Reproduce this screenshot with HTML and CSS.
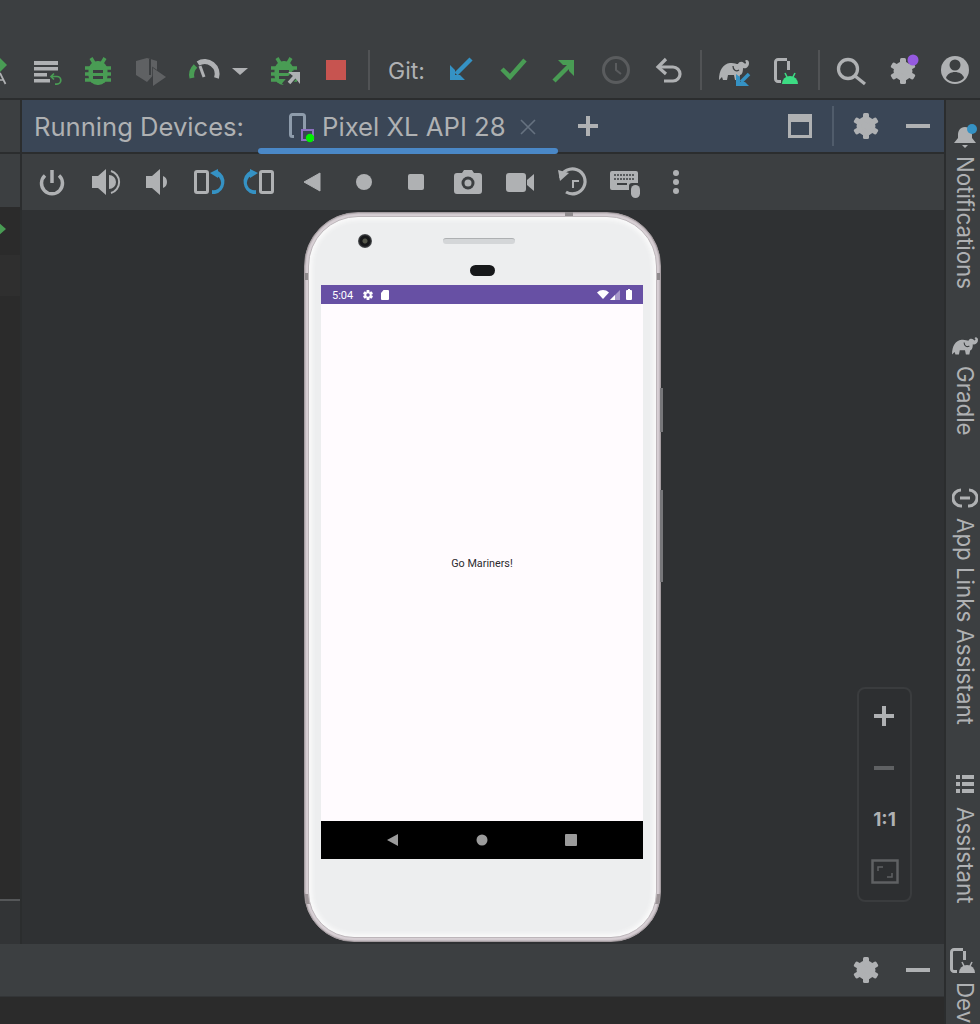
FILE: index.html
```html
<!DOCTYPE html>
<html lang="en">
<head>
<meta charset="utf-8">
<title>Running Devices</title>
<link rel="stylesheet" href="styles.css">
</head>
<body>
<svg class="defs" width="0" height="0" aria-hidden="true">
  <defs>
    <symbol id="gear" viewBox="0 0 26 26">
      <g fill="#afb1b3">
        <rect x="10" y="0" width="6" height="26" rx="1.5"/>
        <rect x="10" y="0" width="6" height="26" rx="1.5" transform="rotate(60 13 13)"/>
        <rect x="10" y="0" width="6" height="26" rx="1.5" transform="rotate(120 13 13)"/>
      </g>
      <circle cx="13" cy="13" r="7" fill="none" stroke="#afb1b3" stroke-width="5"/>
    </symbol>
    <symbol id="bug" viewBox="0 0 26 28">
      <g stroke="#499c54" stroke-width="3.500" fill="none">
        <path d="M6 1l3 5M20 1l-3 5M0 11h6M26 11h-6M0 17h6M26 17h-6M0 23h6M26 23h-6"/>
      </g>
      <rect x="3.500" y="4" width="19" height="24" rx="9" fill="#499c54"/>
      <path d="M8 13h10v3H8zM8 19h10v3H8z" fill="#3c3f41"/>
    </symbol>
    <symbol id="elephant" viewBox="0 0 30 23">
      <path fill="#afb1b3" d="M0 22C0 12 4 6 11 5c4-.5 6 1 8 1 1-2.500 4-3 6-1 1 1 2 1 2-1l-1-1c1-2 4-1 4 2 0 4-3 6-6 5 0 4-1 7-3 7l-1 5h-4l-1-5H9l-1 5H4l-1-3z"/>
      <path d="M14 8c0 4 3 6 6 4" fill="none" stroke="#3c3f41" stroke-width="1.300"/>
    </symbol>
    <symbol id="device" viewBox="0 0 16 25">
      <path d="M13 1.500H4A2.500 2.500 0 0 0 1.500 4v17A2.500 2.500 0 0 0 4 23.500h3M14.500 3v9" fill="none" stroke="#afb1b3" stroke-width="3"/>
    </symbol>
  </defs>
</svg>

<div class="app">
  <header class="toolbar">
    <svg class="slot-edge" viewBox="0 0 21 48"><path d="M0 11l7 7-7 7z" fill="#499c54"/><path d="M0 26l5.500 11M0 33h4" fill="none" stroke="#afb1b3" stroke-width="1.700"/></svg>

    <svg class="slot" viewBox="0 0 52 48"><path fill="#afb1b3" d="M13 14h24v4H13zM13 20h24v3.500H13zM13 26h13v3.500H13zM13 32h16v3.500H13z"/><path d="M33 26.500l-3 3 3 3M30 29.500h6a3.800 3.800 0 0 1 0 7.600h-2" fill="none" stroke="#499c54" stroke-width="1.700"/></svg>
    <svg class="slot" viewBox="0 0 52 48"><use href="#bug" x="12" y="10" width="26" height="28"/></svg>
    <svg class="slot" viewBox="0 0 52 48"><path fill="#5f6163" d="M11 14l11-3 10 3v10L22 35l-11-7z"/><path d="M25 12v16" stroke="#3c3f41" stroke-width="2"/><path d="M28 21l13 9-13 9z" fill="#5f6163" stroke="#3c3f41" stroke-width="1.500" paint-order="stroke"/></svg>
    <svg class="slot" viewBox="0 0 52 48"><path d="M15 31a12.500 12.500 0 0 1 3.500-12" fill="none" stroke="#499c54" stroke-width="5"/><path d="M21 16.500A12.500 12.500 0 0 1 39.500 31" fill="none" stroke="#afb1b3" stroke-width="5"/><path d="M23 19l4 11" stroke="#afb1b3" stroke-width="3"/></svg>
    <svg class="slot-drop" viewBox="0 0 24 48"><path d="M3 21h16l-8 7z" fill="#afb1b3"/></svg>
    <svg class="slot after-drop" viewBox="0 0 52 48"><use href="#bug" x="12" y="10" width="26" height="28"/><path d="M26 39l11-13" stroke="#3c3f41" stroke-width="8"/><path d="M30 36l8-9" stroke="#afb1b3" stroke-width="3.500"/><path d="M29 25h12v12l-4-5-3-3z" fill="#afb1b3"/></svg>
    <svg class="slot" viewBox="0 0 52 48"><rect x="15" y="13" width="20" height="20" fill="#c75450"/></svg>
    <span class="sep sep-a"></span>
    <span class="git">Git:</span>
    <svg class="slot after-git" viewBox="0 0 52 48"><path d="M37 12L22 27" stroke="#3592c4" stroke-width="4.500"/><path d="M16 18v15h15l-5-5h-5v-5z" fill="#3592c4"/></svg>
    <svg class="slot after-blue" viewBox="0 0 52 48"><path d="M15 22l8 8 15-17" fill="none" stroke="#499c54" stroke-width="4.500"/></svg>
    <svg class="slot squeeze" viewBox="0 0 52 48"><path d="M16 34l17-17" stroke="#499c54" stroke-width="4.500"/><path d="M20 13h16v16l-5-5v-6h-6z" fill="#499c54"/></svg>
    <svg class="slot" viewBox="0 0 52 48"><circle cx="26" cy="23" r="12.500" fill="none" stroke="#5a5c5e" stroke-width="3"/><path d="M26 16v7l5 4" fill="none" stroke="#5a5c5e" stroke-width="2"/></svg>
    <svg class="slot" viewBox="0 0 52 48"><path d="M17 20h14a7 7 0 0 1 0 14h-9" fill="none" stroke="#afb1b3" stroke-width="3.200"/><path d="M24 12l-8 8 8 7" fill="none" stroke="#afb1b3" stroke-width="3.200"/></svg>
    <span class="sep sep-b"></span>
    <svg class="slot after-sep" viewBox="0 0 52 48"><use href="#elephant" x="11" y="11" width="30" height="23"/><path d="M26 39l15-15v15z" fill="#3c3f41"/><path d="M41 27L33 35" stroke="#3592c4" stroke-width="3.500"/><path d="M28 27v12h13l-4-4h-5v-5z" fill="#3592c4"/></svg>
    <svg class="slot" viewBox="0 0 52 48"><use href="#device" x="14" y="11" width="16" height="25"/><path d="M22 37a8 8 0 0 1 16 0z" fill="#3ddc84"/><path d="M25 26l2 4M35 26l-2 4" stroke="#3ddc84" stroke-width="1.600"/></svg>
    <span class="sep sep-c"></span>
    <svg class="slot after-sep-c" viewBox="0 0 52 48"><circle cx="22" cy="22" r="9.500" fill="none" stroke="#afb1b3" stroke-width="3.300"/><path d="M29 29l10 8" stroke="#afb1b3" stroke-width="3.300"/></svg>
    <svg class="slot" viewBox="0 0 52 48"><use href="#gear" x="12" y="11" width="26" height="26"/><circle cx="35" cy="13" r="5.500" fill="#955ae0"/></svg>
    <svg class="slot" viewBox="0 0 52 48"><circle cx="25" cy="23" r="14" fill="#afb1b3"/><circle cx="25" cy="18" r="5.500" fill="#3c3f41"/><path d="M16 31c1-4 5-6 9-6s8 2 9 6a12 12 0 0 1-18 0z" fill="#3c3f41"/></svg>
  </header>

  <div class="workspace">
    <div class="main-col">
      <div class="main-row">
        <aside class="left-strip">
          <div class="ls-light ls-head"></div>
          <div class="ls-light ls-tools"></div>
          <div class="ls-dark ls-check">
            <svg class="ls-mark" viewBox="0 0 6 14"><path d="M-2 0l8 7-8 7z" fill="#499c54"/></svg>
          </div>
          <div class="ls-row"></div>
          <div class="ls-dark ls-fill"></div>
          <div class="ls-rule"></div>
          <div class="ls-foot"></div>
        </aside>

        <section class="center">
          <div class="header">
            <span class="header-title">Running Devices:</span>
            <div class="tab">
              <svg class="tab-icon" viewBox="0 0 26 30"><path d="M5 23.500H3.500a2 2 0 0 1-2-2V3.500a2 2 0 0 1 2-2h10a2 2 0 0 1 2 2V16" fill="none" stroke="#8e9cab" stroke-width="3"/><path d="M13 17h11v10H13z" fill="#3a4656" stroke="#8d6fc0" stroke-width="2"/><circle cx="21" cy="25" r="4.200" fill="#00f000"/></svg>
              <span class="tab-label">Pixel XL API 28</span>
              <svg class="tab-close" viewBox="0 0 16 16"><path d="M1 1l14 14M15 1L1 15" stroke="#667280" stroke-width="1.600"/></svg>
            </div>
            <svg class="hdr-plus" viewBox="0 0 20 20"><path d="M10 0v20M0 10h20" stroke="#afb1b3" stroke-width="4"/></svg>
            <div class="hdr-actions">
              <svg class="hdr-window" viewBox="0 0 24 24"><path d="M0 0h24v8H0z" fill="#afb1b3"/><path d="M1.500 1.500h21v21h-21z" fill="none" stroke="#afb1b3" stroke-width="3"/></svg>
              <span class="hdr-sep"></span>
              <svg class="hdr-gear"><use href="#gear"/></svg>
              <span class="minus"></span>
            </div>
          </div>

          <div class="tools">
            <svg class="tool" viewBox="0 0 52 56"><path d="M19 21.500a10.500 10.500 0 1 0 14 0" fill="none" stroke="#afb1b3" stroke-width="3.500"/><path d="M26 16v13" stroke="#afb1b3" stroke-width="3.500"/></svg>
            <svg class="tool" viewBox="0 0 52 56"><path d="M14 22h6l8-7v26l-8-7h-6z" fill="#afb1b3"/><path d="M31 21a7 7 0 0 1 0 14z" fill="#afb1b3"/><path d="M33 17a11.500 11.500 0 0 1 0 22" fill="none" stroke="#afb1b3" stroke-width="2"/></svg>
            <svg class="tool" viewBox="0 0 52 56"><path d="M16 22h6l8-7v26l-8-7h-6z" fill="#afb1b3"/><path d="M33 22a6.500 6.500 0 0 1 0 12z" fill="#afb1b3"/></svg>
            <svg class="tool" viewBox="0 0 52 56"><rect x="13.500" y="17.500" width="12" height="21" rx="1.500" fill="none" stroke="#afb1b3" stroke-width="3"/><path d="M30 40h3a12.500 12.500 0 0 0 3-23l-1 5a7.500 7.500 0 0 1-5 14z" fill="#3592c4"/><path d="M28 19l8-4v9z" fill="#3592c4"/></svg>
            <svg class="tool" viewBox="0 0 52 56"><rect x="26.500" y="17.500" width="12" height="21" rx="1.500" fill="none" stroke="#afb1b3" stroke-width="3"/><path d="M22 40h-3a12.500 12.500 0 0 1-3-23l1 5a7.500 7.500 0 0 0 5 14z" fill="#3592c4"/><path d="M24 19l-8-4v9z" fill="#3592c4"/></svg>
            <svg class="tool" viewBox="0 0 52 56"><path d="M18 28l16-9v18z" fill="#afb1b3" stroke="#afb1b3" stroke-linejoin="round"/></svg>
            <svg class="tool" viewBox="0 0 52 56"><circle cx="26" cy="28" r="8" fill="#afb1b3"/></svg>
            <svg class="tool" viewBox="0 0 52 56"><rect x="18" y="20" width="16" height="16" rx="2" fill="#afb1b3"/></svg>
            <svg class="tool" viewBox="0 0 52 56"><path d="M15 19h5l2-3h8l2 3h5a3 3 0 0 1 3 3v15a3 3 0 0 1-3 3H15a3 3 0 0 1-3-3V22a3 3 0 0 1 3-3z" fill="#afb1b3"/><circle cx="26" cy="29" r="6.500" fill="#3c3f41"/><circle cx="26" cy="29" r="3.500" fill="#afb1b3"/></svg>
            <svg class="tool" viewBox="0 0 52 56"><rect x="12" y="19" width="20" height="19" rx="3" fill="#afb1b3"/><path d="M33 26l7-6v17l-7-6z" fill="#afb1b3"/></svg>
            <svg class="tool" viewBox="0 0 52 56"><path d="M14.500 24A12.500 12.500 0 1 1 20 38" fill="none" stroke="#afb1b3" stroke-width="3.200"/><path d="M12 16l11 3-9 8z" fill="#afb1b3"/><path d="M33 27h-6v7" fill="none" stroke="#afb1b3" stroke-width="2"/></svg>
            <svg class="tool" viewBox="0 0 52 56"><path d="M14 17h24a2 2 0 0 1 2 2v10h-6a3 3 0 0 0-3 3v4H14a2 2 0 0 1-2-2V19a2 2 0 0 1 2-2z" fill="#afb1b3"/><path d="M16 21h20M16 25h20" stroke="#3c3f41" stroke-width="1.500" stroke-dasharray="2 1"/><path d="M19 30h10" stroke="#3c3f41" stroke-width="2"/><rect x="33" y="31" width="9" height="13" rx="4.500" fill="#afb1b3"/></svg>
            <svg class="tool" viewBox="0 0 52 56"><g fill="#afb1b3"><circle cx="26" cy="19" r="3"/><circle cx="26" cy="28" r="3"/><circle cx="26" cy="37" r="3"/></g></svg>
          </div>

          <div class="canvas">
            <div class="phone">
              <span class="phone-mark"></span>
              <span class="phone-key key-a"></span>
              <span class="phone-key key-b"></span>
              <div class="face">
                <span class="camera"></span>
                <span class="speaker"></span>
                <span class="sensor"></span>
                <div class="screen">
                  <div class="status">
                    <span class="clock">5:04</span>
                    <svg class="st-gear" viewBox="0 0 26 26"><g fill="#fff"><rect x="9" y="0" width="8" height="26" rx="2"/><rect x="9" y="0" width="8" height="26" rx="2" transform="rotate(60 13 13)"/><rect x="9" y="0" width="8" height="26" rx="2" transform="rotate(120 13 13)"/></g><circle cx="13" cy="13" r="4.500" fill="#6750a4"/></svg>
                    <svg class="st-sd" viewBox="0 0 8 10"><path d="M2.500 0H7a1 1 0 0 1 1 1v8a1 1 0 0 1-1 1H1a1 1 0 0 1-1-1V3z" fill="#fff"/></svg>
                    <span class="st-spacer"></span>
                    <svg class="st-wifi" viewBox="0 0 12 9"><path d="M0 2.500C3.500-.8 8.500-.8 12 2.500L6 9z" fill="#fff"/></svg>
                    <svg class="st-signal" viewBox="0 0 10 10"><path d="M0 10L10 0v10z" fill="#a899cb"/><path d="M0 10l5-5v5z" fill="#fff"/></svg>
                    <svg class="st-batt" viewBox="0 0 6 11"><path d="M2 0h2v1h1a1 1 0 0 1 1 1v8a1 1 0 0 1-1 1H1a1 1 0 0 1-1-1V2a1 1 0 0 1 1-1h1z" fill="#fff"/></svg>
                  </div>
                  <div class="content"><span class="hello">Go Mariners!</span></div>
                  <div class="navbar">
                    <svg class="nav-ico" viewBox="0 0 12 12"><path d="M0 6l11-6v12z" fill="#9b9b9b"/></svg>
                    <svg class="nav-ico" viewBox="0 0 12 12"><circle cx="6" cy="6" r="5.500" fill="#9b9b9b"/></svg>
                    <svg class="nav-ico" viewBox="0 0 12 12"><rect width="12" height="12" rx="1" fill="#9b9b9b"/></svg>
                  </div>
                </div>
              </div>
            </div>

            <div class="zoom-panel">
              <svg class="zp" viewBox="1 0 51 52"><path d="M26 16v20M16 26h20" stroke="#afb1b3" stroke-width="4"/></svg>
              <svg class="zp" viewBox="1 0 51 52"><path d="M16 26h20" stroke="#5f6163" stroke-width="4"/></svg>
              <span class="zp zp-text">1:1</span>
              <svg class="zp" viewBox="1 1 51 52"><rect x="14.500" y="15.500" width="25" height="22" fill="none" stroke="#5f6163" stroke-width="2.500"/><path d="M20 26v-4h5M34 28v4h-5" fill="none" stroke="#5f6163" stroke-width="1.500"/></svg>
            </div>
          </div>
        </section>
      </div>

      <div class="bottom-bar">
        <svg class="hdr-gear"><use href="#gear"/></svg>
        <span class="minus"></span>
      </div>
      <div class="footer"></div>
    </div>

    <aside class="sidebar">
      <svg class="side-ico ico-bell" viewBox="0 0 26 26"><path d="M13 4c-5 0-7 4-7 8v3l-4 5h22l-4-5v-3c0-4-2-8-7-8zM10 22h6l-3 3z" fill="#afb1b3"/><circle cx="20" cy="6" r="5" fill="#3592c4"/></svg>
      <span class="side-text text-a">Notifications</span>
      <svg class="side-ico ico-gradle" viewBox="0 0 30 23"><use href="#elephant"/></svg>
      <span class="side-text text-b">Gradle</span>
      <svg class="side-ico ico-link" viewBox="0 0 26 20"><path d="M9 2H9a8 8 0 0 0 0 16h1M17 2h0a8 8 0 0 1 0 16h-1M8 10h10" fill="none" stroke="#afb1b3" stroke-width="3"/></svg>
      <span class="side-text text-b">App Links Assistant</span>
      <svg class="side-ico ico-list" viewBox="0 0 18 18"><path d="M0 0h4v4H0zM6 0h12v4H6zM0 7h4v4H0zM6 7h12v4H6zM0 14h4v4H0zM6 14h12v4H6z" fill="#afb1b3"/></svg>
      <span class="side-text text-c">Assistant</span>
      <svg class="side-ico ico-dev" viewBox="0 0 26 25"><use href="#device" width="16" height="25"/><path d="M9 25a8 8 0 0 1 16 0z" fill="#afb1b3"/><path d="M12 14l2 4M22 14l-2 4" stroke="#afb1b3" stroke-width="1.600"/></svg>
      <span class="side-text text-d">Dev</span>
    </aside>
  </div>
</div>
</body>
</html>
```

FILE: styles.css
```css
* { box-sizing: border-box; }

html, body {
  margin: 0;
  padding: 0;
  background: #3c3f41;
}

body {
  width: 980px;
  height: 1024px;
  overflow: hidden;
  font-family: Inter, "Liberation Sans", sans-serif;
  color: #afb1b3;
}

.defs { position: absolute; }

.app {
  display: flex;
  flex-direction: column;
  height: 1024px;
}

/* top toolbar */
.toolbar {
  display: flex;
  align-items: flex-start;
  flex: none;
  height: 100px;
  padding-top: 47px;
  background: #3c3f41;
  border-bottom: 2px solid #2b2d2e;
  overflow: hidden;
}

.toolbar svg { flex: none; height: 48px; }
.slot-edge { width: 21px; }
.slot { width: 52px; }
.slot-drop { width: 24px; }
.after-drop { margin-left: 6px; }
.after-git { margin-left: 10px; }
.after-blue { margin-left: 1px; }
.squeeze { margin-left: -1px; }
.after-sep { margin-left: 6px; }
.after-sep-c { margin-left: 6px; }

.sep {
  flex: none;
  width: 2px;
  height: 40px;
  margin-top: 3px;
  background: #515355;
}
.sep-a { margin-left: 5px; }
.sep-b { margin-left: 6px; }
.sep-c { margin-left: 6px; }

.git {
  flex: none;
  margin: 10px 0 0 18px;
  width: 36px;
  font-size: 23px;
  line-height: 28px;
  white-space: nowrap;
}

/* workspace */
.workspace {
  display: flex;
  flex: 1;
  min-height: 0;
}

.main-col {
  display: flex;
  flex-direction: column;
  width: 944px;
  flex: none;
}

.main-row {
  display: flex;
  flex: none;
  height: 844px;
  background: #2b2d2e;
}

/* left strip */
.left-strip {
  display: flex;
  flex-direction: column;
  flex: none;
  width: 20px;
  margin-right: 2px;
}
.ls-light { background: #3c3f41; }
.ls-head { height: 52px; margin-bottom: 2px; }
.ls-tools { height: 53px; }
.ls-dark { background: #2b2b2b; }
.ls-check { height: 48px; padding-top: 15px; }
.ls-mark { display: block; width: 6px; height: 14px; }
.ls-row { height: 41px; background: #2f2f2f; }
.ls-fill { flex: 1; }
.ls-rule { height: 2px; background: #555759; }
.ls-foot { height: 43px; background: #323436; }

/* center column */
.center {
  display: flex;
  flex-direction: column;
  flex: 1;
  min-width: 0;
}

.header {
  display: flex;
  align-items: center;
  flex: none;
  height: 52px;
  padding-left: 12px;
  background: #3a4656;
}

.header-title {
  flex: none;
  width: 224px;
  font-size: 25.600px;
  white-space: nowrap;
}

.tab {
  position: relative;
  display: flex;
  align-items: center;
  flex: none;
  align-self: stretch;
  width: 300px;
  padding-left: 31px;
}

.tab::after {
  content: "";
  position: absolute;
  left: 0;
  right: 0;
  bottom: -2px;
  height: 6px;
  border-radius: 3px;
  background: #4a88c7;
}

.tab-icon { flex: none; width: 26px; height: 30px; margin-top: 4px; }
.tab-label {
  flex: none;
  width: 183px;
  margin-left: 7px;
  font-size: 25.700px;
  white-space: nowrap;
}
.tab-close { flex: none; width: 16px; height: 16px; margin: 1px 0 0 15px; }

.hdr-plus { flex: none; width: 20px; height: 20px; margin-left: 20px; }

.hdr-actions {
  display: flex;
  align-items: center;
  margin-left: auto;
}

.hdr-window { flex: none; width: 24px; height: 24px; }
.hdr-sep {
  flex: none;
  width: 2px;
  height: 40px;
  margin: 0 19px 0 20px;
  background: #505c6b;
}
.hdr-gear { flex: none; width: 26px; height: 26px; }

.minus {
  flex: none;
  width: 24px;
  height: 4px;
  margin: 0 14px 0 27px;
  background: #afb1b3;
}

.tools {
  display: flex;
  flex: none;
  height: 56px;
  margin-top: 2px;
  padding-left: 4px;
  background: #3c3f41;
}
.tool { flex: none; width: 52px; height: 56px; }

/* canvas */
.canvas {
  position: relative;
  display: flex;
  justify-content: center;
  align-items: flex-start;
  flex: 1;
  padding-top: 2px;
  background: #2f3133;
}

.phone {
  position: relative;
  flex: none;
  width: 357px;
  height: 730px;
  margin-left: -1px;
  padding: 3px;
  border: 1px solid #a59da1;
  border-radius: 54px 54px 50px 50px;
  background: linear-gradient(to bottom, #d8d0d5 0 60px, #8f8b8d 60px 67px, #d8d0d5 67px 681px, #9d9598 681px 691px, #d8d0d5 691px);
  box-shadow: inset 0 0 2px #8b8387;
}

.phone-mark {
  position: absolute;
  top: -1px;
  left: 260px;
  width: 8px;
  height: 4px;
  background: #8f8a8d;
}

.phone-key {
  position: absolute;
  right: -3px;
  width: 3px;
  background: #77777a;
}
.key-a { top: 175px; height: 44px; }
.key-b { top: 277px; height: 92px; }

.face {
  position: relative;
  height: 100%;
  padding: 68px 13px 78px 12px;
  border: 1px solid #bdb6ba;
  border-radius: 50px 50px 46px 46px;
  background: #edeeef;
  box-shadow: inset 0 0 4px 3px #fafafa;
}

.camera {
  position: absolute;
  top: 17px;
  left: 49px;
  width: 14px;
  height: 14px;
  border-radius: 50%;
  background: radial-gradient(circle, #55574a 0 2px, #17181a 3px 5px, #55575a 7px);
}

.speaker {
  position: absolute;
  top: 21px;
  left: 134px;
  width: 72px;
  height: 6px;
  border-radius: 3px;
  border-top: 1px solid #aeb0b2;
  background: #d4d6d8;
}

.sensor {
  position: absolute;
  top: 48px;
  left: 161px;
  width: 25px;
  height: 11px;
  border-radius: 6px;
  background: #17181a;
}

.screen {
  display: flex;
  flex-direction: column;
  height: 100%;
}

.status {
  display: flex;
  align-items: center;
  flex: none;
  height: 19px;
  padding: 0 11px;
  background: #6750a4;
}

.clock {
  flex: none;
  width: 31px;
  margin-top: 1px;
  font-family: Roboto, sans-serif;
  font-size: 11px;
  color: #fff;
}

.st-gear { flex: none; width: 10px; height: 10px; }
.st-sd { flex: none; width: 8px; height: 10px; margin-left: 8px; }
.st-spacer { flex: 1; }
.st-wifi { flex: none; width: 12px; height: 9px; }
.st-signal { flex: none; width: 10px; height: 10px; margin-left: 1px; }
.st-batt { flex: none; width: 6px; height: 11px; margin-left: 6px; }

.content {
  display: flex;
  justify-content: center;
  align-items: center;
  flex: 1;
  padding-top: 2px;
  background: #fffbfe;
}

.hello {
  font-family: Roboto, sans-serif;
  font-size: 10.800px;
  color: #2b2a2e;
}

.navbar {
  display: flex;
  justify-content: center;
  align-items: center;
  gap: 77px;
  flex: none;
  height: 38px;
  background: #000;
}
.nav-ico { flex: none; width: 12px; height: 12px; }

/* zoom panel */
.zoom-panel {
  position: absolute;
  top: 477px;
  right: 32px;
  display: flex;
  flex-direction: column;
  width: 55px;
  height: 215px;
  padding-top: 1px;
  border: 2px solid #3a3c3e;
  border-radius: 8px;
  background: #2d2f31;
}

.zp {
  display: block;
  flex: none;
  width: 51px;
  height: 52px;
}

.zp-text {
  font-size: 19px;
  font-weight: 700;
  line-height: 52px;
  text-align: center;
}

/* bottom */
.bottom-bar {
  display: flex;
  justify-content: flex-end;
  align-items: center;
  flex: none;
  height: 52px;
  background: #3c3f41;
}

.footer {
  flex: 1;
  border-top: 1px solid #333537;
  background: #2b2b2b;
}

/* sidebar */
.sidebar {
  display: flex;
  flex-direction: column;
  align-items: center;
  flex: none;
  width: 36px;
  padding-top: 23px;
  padding-left: 4px;
  border-left: 2px solid #2b2d2e;
  background: #3c3f41;
  overflow: hidden;
}

.side-ico { display: block; flex: none; }
.side-text {
  flex: none;
  writing-mode: vertical-rl;
  font-size: 22.300px;
  line-height: 24px;
  white-space: nowrap;
}
.text-a { margin-top: 7px; }
.text-b { margin-top: 10px; }
.text-c { margin-top: 14px; }
.text-d { margin-top: 9px; }

.ico-bell { width: 26px; height: 26px; }
.ico-gradle { width: 26px; height: 21px; margin-top: 46px; }
.ico-link { width: 26px; height: 20px; margin-top: 52px; }
.ico-list { width: 18px; height: 18px; margin-top: 50px; }
.ico-dev { width: 26px; height: 25px; margin-top: 45px; margin-left: -4px; }
```
